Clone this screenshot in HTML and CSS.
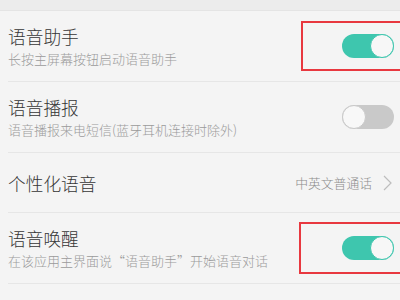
FILE: index.html
```html
<!DOCTYPE html>
<html lang="zh-CN">
<head>
    <meta charset="UTF-8">
    <title>语音设置</title>
    <meta name="viewport" content="width=device-width, initial-scale=1.0">
    <link rel="stylesheet" href="styles.css">
</head>
<body>
    <div class="top-band"></div>
    <ul class="setting-list">
        <li class="setting-row">
            <div class="setting-text">
                <div class="setting-title">语音助手</div>
                <div class="setting-desc">长按主屏幕按钮启动语音助手</div>
            </div>
            <span class="switch on"><span class="knob"></span></span>
            <span class="mark mark-first"></span>
        </li>
        <li class="setting-row">
            <div class="setting-text">
                <div class="setting-title">语音播报</div>
                <div class="setting-desc">语音播报来电短信(蓝牙耳机连接时除外)</div>
            </div>
            <span class="switch"><span class="knob"></span></span>
        </li>
        <li class="setting-row short">
            <div class="setting-text">
                <div class="setting-title">个性化语音</div>
            </div>
            <span class="setting-value">中英文普通话</span>
            <svg class="chevron" width="9" height="16" viewBox="0 0 9 16">
                <path d="M1 1 L8 8 L1 15" fill="none" stroke="#bdbdbd" stroke-width="1.2"/>
            </svg>
        </li>
        <li class="setting-row">
            <div class="setting-text">
                <div class="setting-title">语音唤醒</div>
                <div class="setting-desc">在该应用主界面说“语音助手”开始语音对话</div>
            </div>
            <span class="switch on"><span class="knob"></span></span>
            <span class="mark mark-last"></span>
        </li>
    </ul>
</body>
</html>
```

FILE: styles.css
```css
body, html {
    margin: 0; padding: 0; background: #f4f4f4; color: #333;
    font-family: "Noto Sans CJK SC", "Noto Sans", sans-serif;
    overflow: hidden;
}
.top-band { height: 10px; background: #ececec; border-bottom: 1px solid #e4e4e4; }
.setting-list { list-style: none; margin: 0; padding: 0 0 0 8px; }
.setting-row {
    position: relative; display: flex; align-items: center;
    height: 71px; border-bottom: 1px solid #e6e6e6; box-sizing: border-box;
}
.setting-row.short { height: 60px; }
.setting-text { flex: 1; }
.setting-title { font-size: 17.7px; line-height: 22px; color: #363636; font-weight: 300; }
.setting-desc { font-size: 13px; line-height: 18px; color: #9b9b9b; margin-top: 3px; font-weight: 300; }
.setting-value { font-size: 12.8px; color: #8c8c8c; margin-right: 11px; font-weight: 300; }
.chevron { margin-right: 8px; }

.switch {
    width: 52px; height: 24px; border-radius: 12px; background: #c9c9c9;
    margin-right: 6px; display: flex; align-items: center; box-sizing: border-box;
}
.switch .knob {
    width: 24px; height: 24px; border-radius: 50%; background: #f8f8f8;
    border: 1.5px solid #c9c9c9; box-sizing: border-box;
}
.switch.on { background: #3ec6ae; justify-content: flex-end; }
.switch.on .knob { border-color: #3ec6ae; background: #f7f7f7; }

.mark {
    position: absolute; right: 0; border: 2px solid #e8383f;
    border-right: none; box-sizing: border-box;
}
.mark-first { left: 293px; top: 10px; height: 50px; }
.mark-last { left: 291px; top: 9px; height: 52px; }
```
